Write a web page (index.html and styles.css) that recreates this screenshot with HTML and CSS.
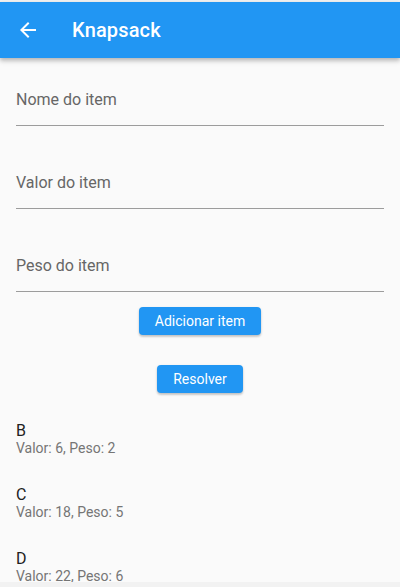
FILE: index.html
```html
<!DOCTYPE html>
<html lang="pt">
<head>
<meta charset="utf-8">
<title>Knapsack</title>
<link rel="stylesheet" href="styles.css">
</head>
<body>
<div class="strip"></div>
<header class="appbar">
  <span class="back">
    <svg width="24" height="24" viewBox="0 0 24 24"><path fill="#fff" d="M20 11H7.83l5.59-5.59L12 4l-8 8 8 8 1.41-1.41L7.83 13H20v-2z"/></svg>
  </span>
  <h1 class="title">Knapsack</h1>
</header>
<main class="content">
  <div class="fields">
    <div class="field"><span class="label">Nome do item</span></div>
    <div class="field"><span class="label">Valor do item</span></div>
    <div class="field"><span class="label">Peso do item</span></div>
  </div>
  <div class="actions">
    <button class="btn">Adicionar item</button>
    <button class="btn">Resolver</button>
  </div>
</main>
<ul class="list">
  <li class="tile"><div class="t">B</div><div class="s">Valor: 6, Peso: 2</div></li>
  <li class="tile"><div class="t">C</div><div class="s">Valor: 18, Peso: 5</div></li>
  <li class="tile"><div class="t">D</div><div class="s">Valor: 22, Peso: 6</div></li>
</ul>
<div class="navstrip"></div>
</body>
</html>
```
FILE: styles.css
```css
html, body {
  margin: 0;
  padding: 0;
  height: 100%;
  overflow: hidden;
  background: #fafafa;
  font-family: Roboto, "Noto Sans", sans-serif;
}
.strip {
  height: 2px;
  background: #f0f0f0;
}
.appbar {
  height: 56px;
  background: #2196f3;
  display: flex;
  align-items: center;
  padding-left: 16px;
  box-shadow: 0 2px 4px rgba(0,0,0,0.2), 0 4px 5px rgba(0,0,0,0.1);
  position: relative;
  z-index: 1;
}
.back {
  width: 24px;
  height: 24px;
  display: flex;
}
.title {
  margin: 0 0 0 32px;
  color: #fff;
  font-size: 20px;
  font-weight: 500;
  letter-spacing: 0.15px;
}
.content {
  padding: 0 16px;
}
.fields {
  display: flex;
  flex-direction: column;
  gap: 15px;
}
.field {
  padding: 30px 0 13px;
  border-bottom: 1px solid #9c9c9c;
}
.label {
  display: block;
  font-size: 16px;
  line-height: 24px;
  color: #666;
}
.actions {
  display: flex;
  flex-direction: column;
  align-items: center;
  gap: 30px;
  padding-top: 15px;
  padding-bottom: 16px;
}
.btn {
  height: 28px;
  padding: 0 16px;
  border: none;
  border-radius: 4px;
  background: #2196f3;
  color: #fff;
  font-family: Roboto, sans-serif;
  font-size: 14px;
  font-weight: 400;
  box-shadow: 0 2px 2px rgba(0,0,0,0.14), 0 1px 3px rgba(0,0,0,0.12);
}
.list {
  list-style: none;
  margin: 0;
  padding: 0;
}
.tile {
  height: 64px;
  box-sizing: border-box;
  padding: 13px 16px 0;
}
.t {
  font-size: 16px;
  line-height: 18px;
  color: #212121;
}
.s {
  font-size: 14px;
  line-height: 16px;
  color: #757575;
}
.navstrip {
  position: fixed;
  left: 0;
  right: 0;
  bottom: 0;
  height: 5px;
  background: #f2f2f2;
}
```
